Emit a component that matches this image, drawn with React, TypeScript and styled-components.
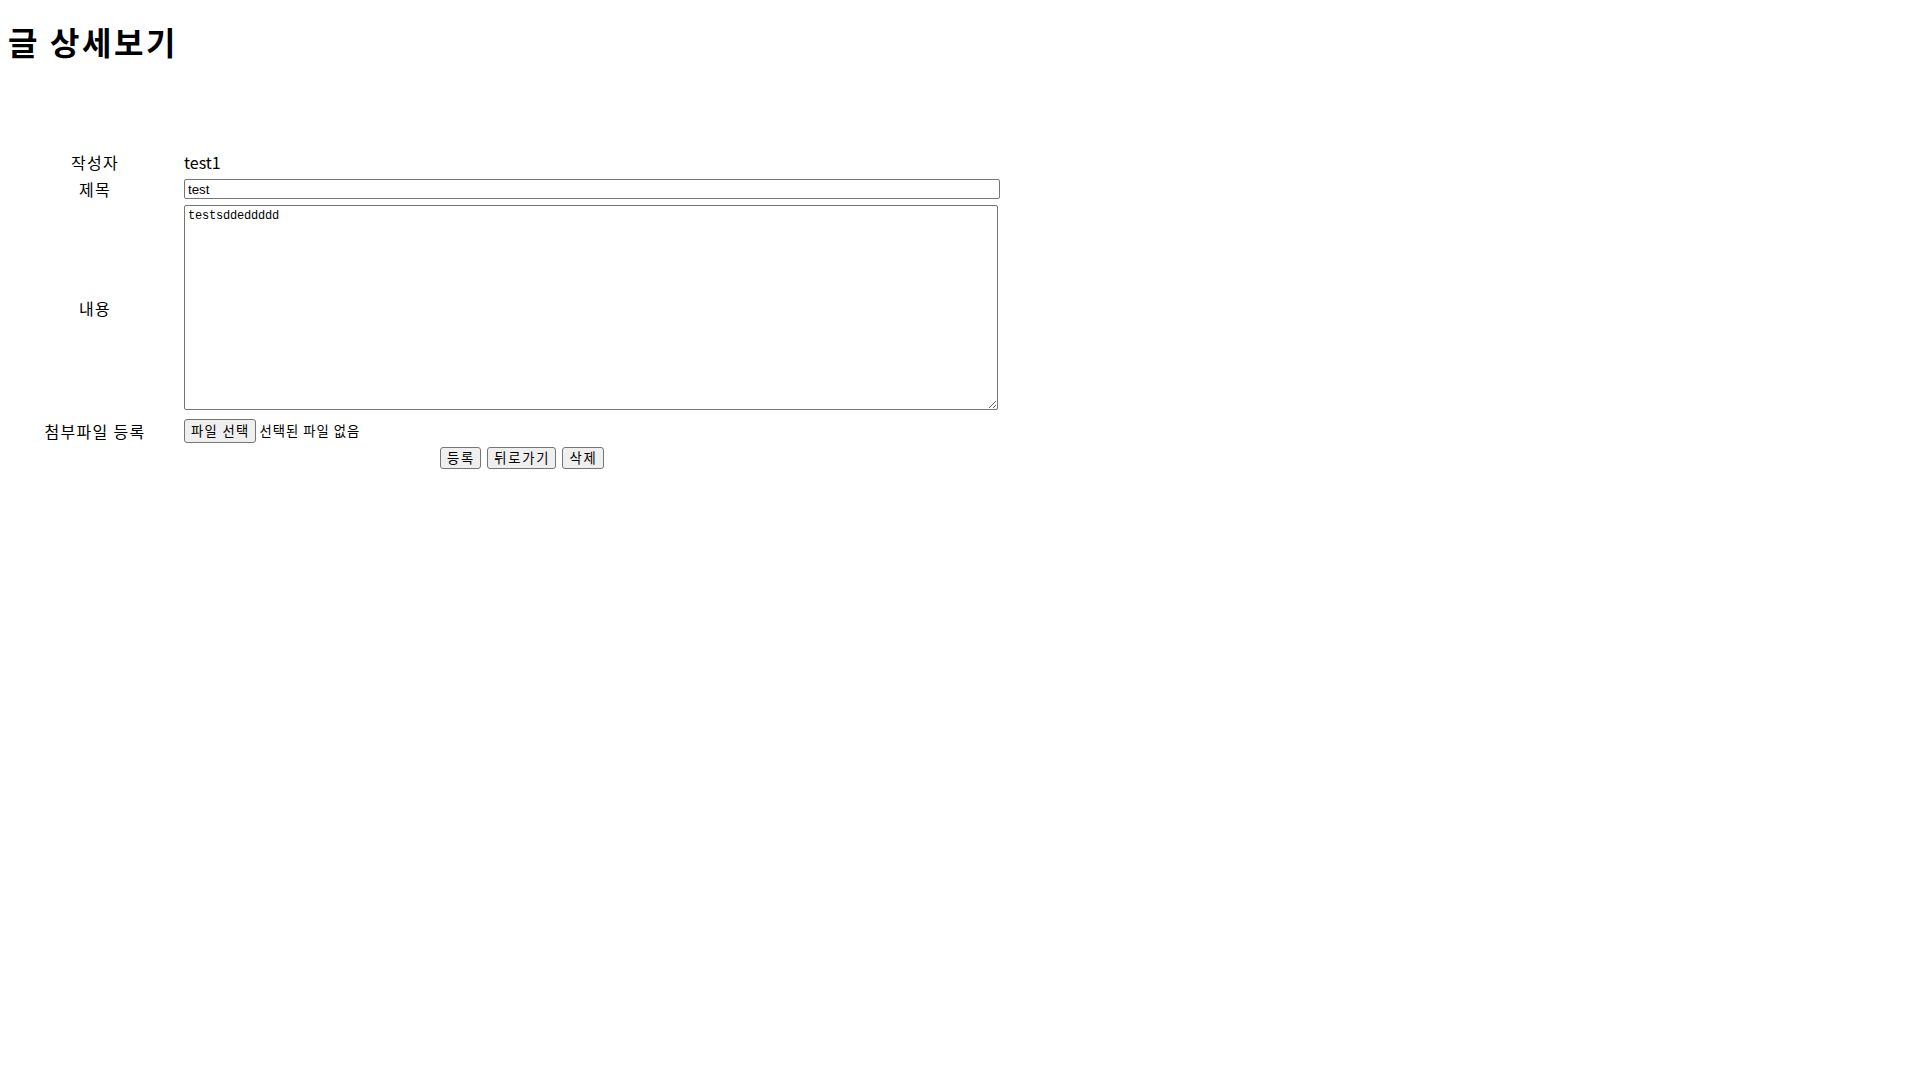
import React from 'react';
import styled, { createGlobalStyle } from 'styled-components';

const GlobalStyle = createGlobalStyle`
  body {
    margin: 0;
    background: #ffffff;
    color: #000000;
    font-family: 'Noto Sans CJK KR', 'Noto Sans', sans-serif;
  }
`;

const Page = styled.div`
  padding: 0 0 0 8px;
`;

const Heading = styled.h1`
  margin: 23px 0 0;
  font-size: 32px;
  line-height: 37px;
  font-weight: 700;
  letter-spacing: 2.6px;
`;

const Form = styled.form`
  margin: 90px 0 0 2px;
  display: grid;
  grid-template-columns: 170px 820px;
  column-gap: 4px;
`;

const Label = styled.div<{ $top?: number; $height: number }>`
  margin-top: ${(props) => props.$top ?? 0}px;
  height: ${(props) => props.$height}px;
  display: flex;
  align-items: center;
  justify-content: center;
  font-size: 16px;
  line-height: 22px;
  letter-spacing: 1.3px;
`;

const Value = styled.div<{ $top?: number; $height: number }>`
  margin-top: ${(props) => props.$top ?? 0}px;
  height: ${(props) => props.$height}px;
  display: flex;
  align-items: center;
  font-size: 16px;
  line-height: 22px;
`;

const TitleInput = styled.input`
  box-sizing: border-box;
  width: 816px;
  height: 20px;
  margin: 0;
  padding: 1px 3px;
  border: 1px solid #767676;
  border-radius: 2px;
  font-family: 'Liberation Sans', Arial, sans-serif;
  font-size: 13.33px;
  color: #000;
`;

const ContentArea = styled.textarea`
  box-sizing: border-box;
  width: 814px;
  height: 205px;
  margin: 0;
  padding: 2px 3px;
  border: 1px solid #767676;
  border-radius: 2px;
  font-family: 'Liberation Mono', 'DejaVu Sans Mono', monospace;
  font-size: 12px;
  line-height: 16px;
  letter-spacing: -0.2px;
  color: #000;
  align-self: flex-start;
`;

const Button = styled.button`
  box-sizing: border-box;
  height: 22px;
  margin: 0;
  padding: 0 5px 0 6px;
  border: 1px solid #767676;
  border-radius: 3px;
  background: #efefef;
  font-family: 'Noto Sans CJK KR', 'Noto Sans', sans-serif;
  font-size: 13.33px;
  line-height: 20px;
  letter-spacing: 1.8px;
  color: #000;
  cursor: pointer;
`;

const FileButton = styled(Button)`
  height: 24px;
  letter-spacing: 1.3px;
`;

const FileName = styled.span`
  margin-left: 4px;
  font-size: 13.33px;
  line-height: 20px;
  letter-spacing: 1px;
`;

const Actions = styled.div`
  grid-column: 2;
  margin-top: 4px;
  padding-left: 256px;
  display: flex;
  gap: 6px;
`;

export default function App() {
  return (
    <Page>
      <GlobalStyle />
      <Heading>글 상세보기</Heading>
      <Form onSubmit={(e) => e.preventDefault()}>
        <Label $height={23}>작성자</Label>
        <Value $height={23}>test1</Value>

        <Label $top={6} $height={20}>제목</Label>
        <Value $top={6} $height={20}>
          <TitleInput defaultValue="test" />
        </Value>

        <Label $top={6} $height={205}>내용</Label>
        <Value $top={6} $height={205}>
          <ContentArea defaultValue="testsddeddddd" />
        </Value>

        <Label $top={9} $height={24}>첨부파일 등록</Label>
        <Value $top={9} $height={24}>
          <FileButton type="button">파일 선택</FileButton>
          <FileName>선택된 파일 없음</FileName>
        </Value>

        <Actions>
          <Button type="submit">등록</Button>
          <Button type="button">뒤로가기</Button>
          <Button type="button">삭제</Button>
        </Actions>
      </Form>
    </Page>
  );
}
